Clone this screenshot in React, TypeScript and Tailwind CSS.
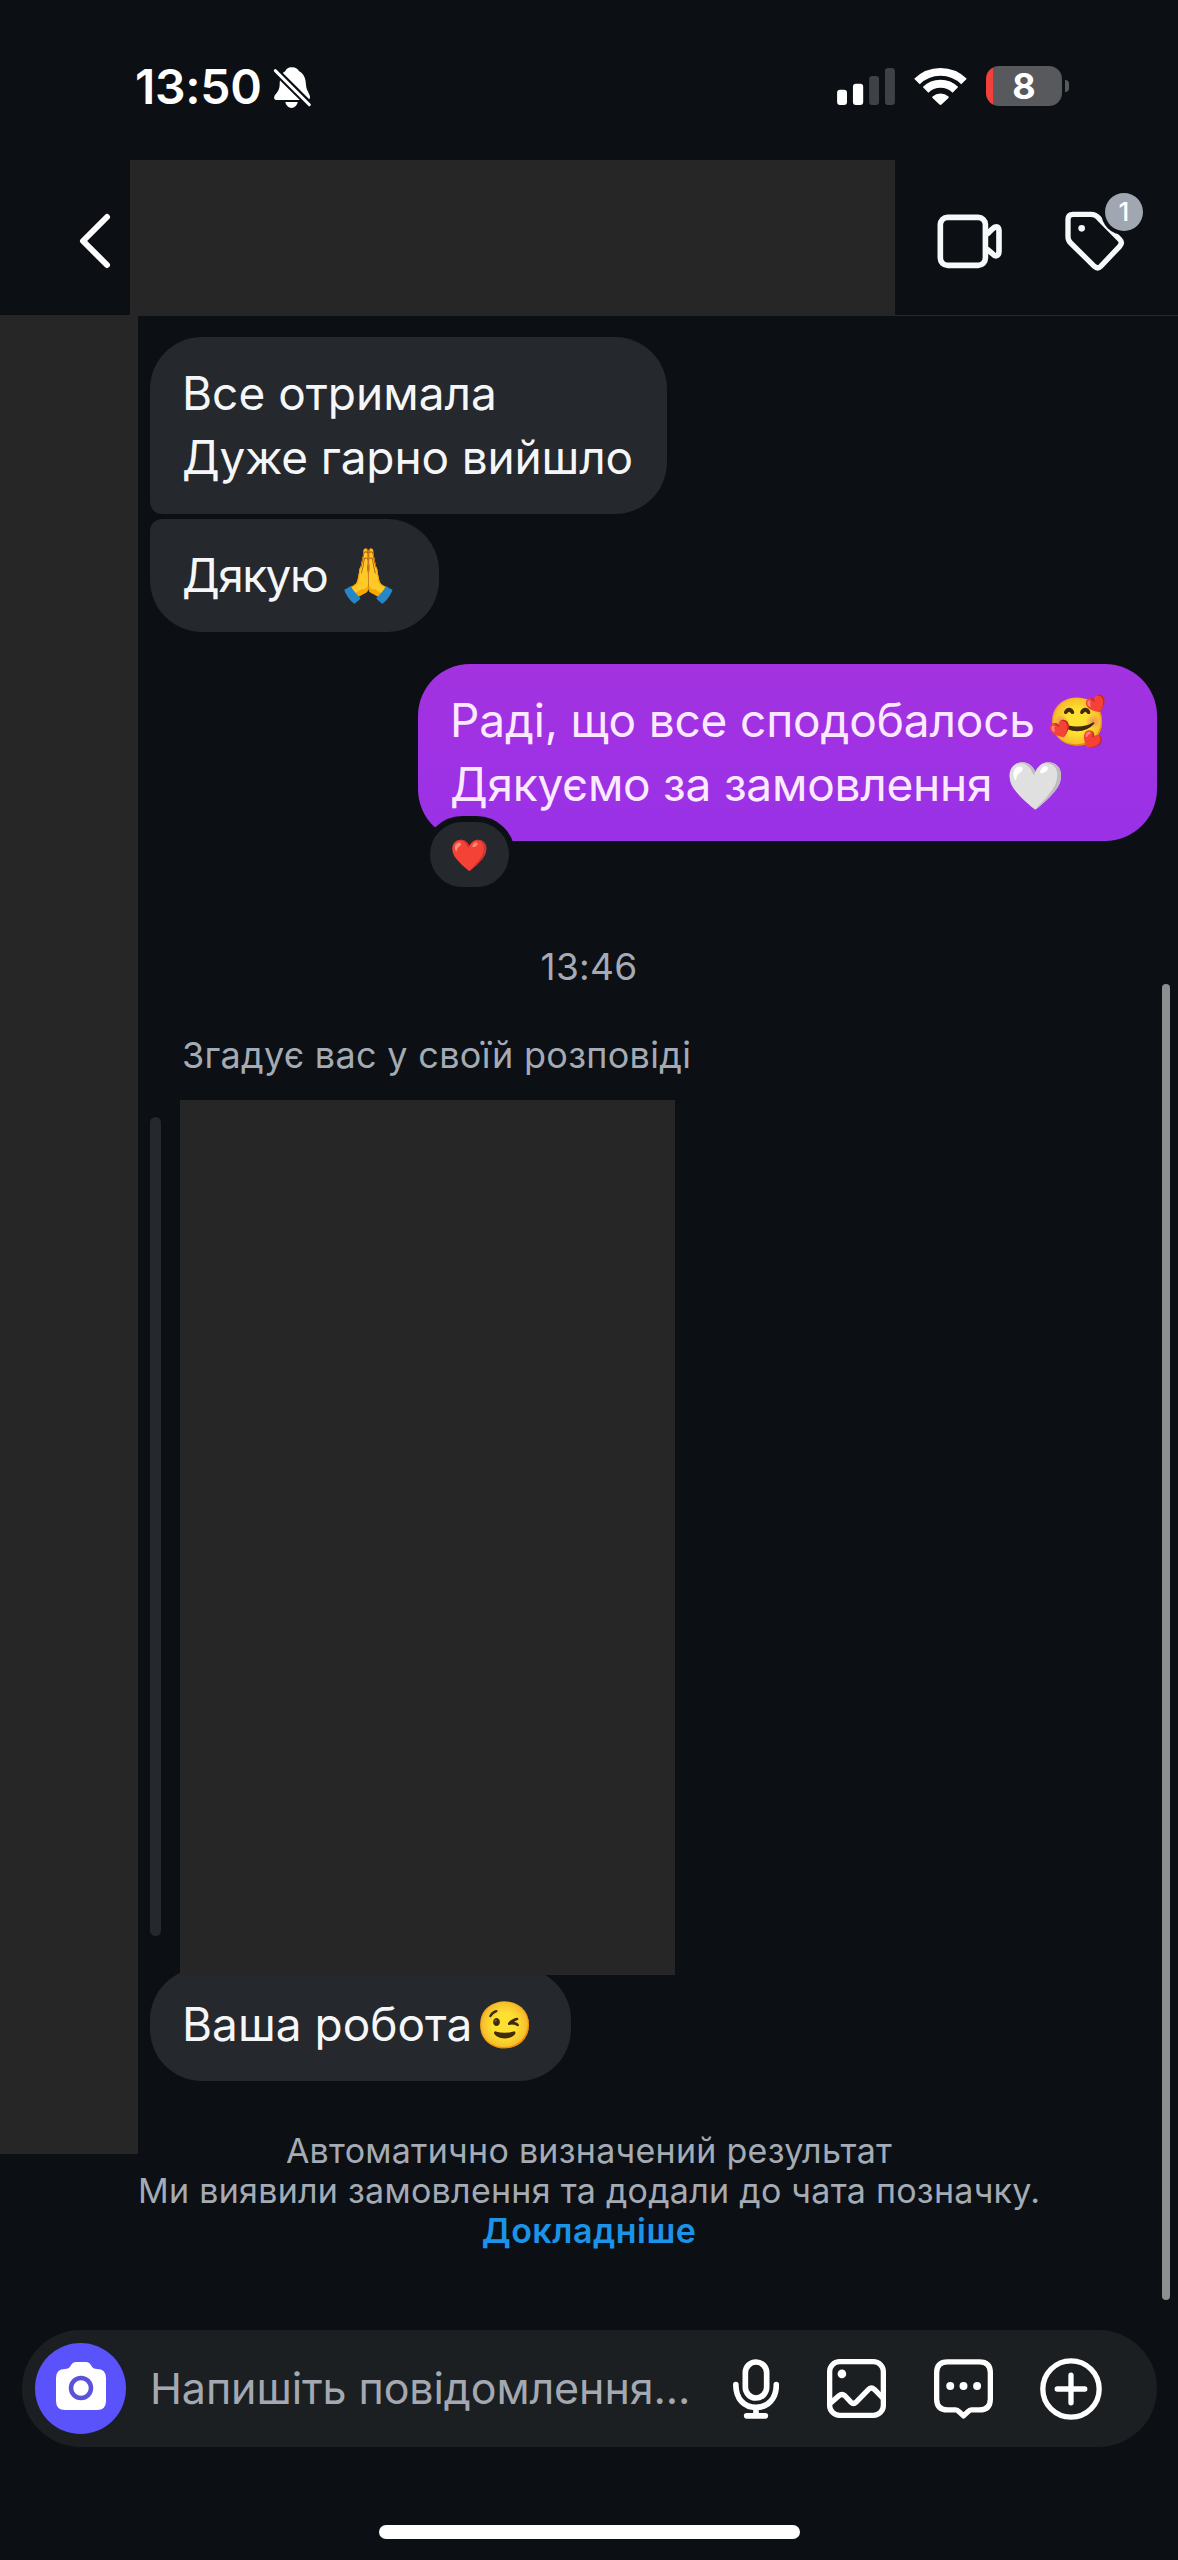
import type { ReactNode } from 'react';
import clsx from 'clsx';

function Emoji({ children, className }: { children: ReactNode; className?: string }) {
  return (
    <span className={clsx('flex shrink-0 items-center justify-center overflow-visible leading-none', className)}>
      {children}
    </span>
  );
}

function Line({ children, className }: { children: ReactNode; className?: string }) {
  return <div className={clsx('flex h-16 items-center leading-[64px] whitespace-pre', className)}>{children}</div>;
}

function Bubble({ children, className }: { children: ReactNode; className?: string }) {
  return (
    <div className={clsx('shrink-0 rounded-[52px] px-8 pt-6 text-[46px] text-[#f5f6f8]', className)}>{children}</div>
  );
}

function BellOff() {
  return (
    <svg viewBox="636 78 118 128" className="h-[43px] w-[39px]" aria-hidden="true">
      <path
        fill="#fff"
        d="M693 81c12 0 19 6 22 12 16 8 20 24 21 42 1 17 12 26 12 36 0 6-3 9-9 9H647c-7 0-9-5-7-11 4-9 15-15 16-33 1-22 3-37 17-43 3-6 8-12 20-12z"
      />
      <path fill="#fff" d="M673 186h38c-3 11-10 18-19 18s-16-7-19-18z" />
      <path stroke="#0c1014" strokeWidth="22" d="M636 84l118 117" />
      <path stroke="#fff" strokeWidth="9" strokeLinecap="round" d="M643 91l103 103" />
    </svg>
  );
}

function Signal() {
  return (
    <svg viewBox="108 83 175 112" className="h-[37px] w-[58px]" aria-hidden="true">
      <rect x="108" y="149" width="30" height="46" rx="9" fill="#fff" />
      <rect x="156" y="131" width="31" height="64" rx="9" fill="#fff" />
      <rect x="205" y="107" width="30" height="88" rx="9" fill="#3e4145" />
      <rect x="253" y="83" width="30" height="112" rx="9" fill="#3e4145" />
    </svg>
  );
}

function Wifi() {
  return (
    <svg viewBox="340 81 160 114" className="h-[38px] w-[53px]" fill="none" stroke="#fff" aria-hidden="true">
      <path strokeWidth="24" d="M349 124.500a101 101 0 0 1 142 0" />
      <path strokeWidth="24" d="M375 149.500a64 64 0 0 1 90 0" />
      <path fill="#fff" stroke="none" d="M396 170a36 36 0 0 1 48 0q2 2 0 4l-21 20q-3 2-6 0l-21-20q-2-2 0-4z" />
    </svg>
  );
}

function StatusBar() {
  return (
    <div className="flex h-[160px] shrink-0 items-start text-white">
      <div className="mt-[57px] ml-[135px] text-[48px] leading-[60px] font-semibold tracking-[-0.3px]">13:50</div>
      <div className="mt-[66px] ml-[11px]">
        <BellOff />
      </div>
      <div className="mt-[66px] mr-[109px] ml-auto flex h-10 items-center">
        <Signal />
        <div className="ml-[19px]">
          <Wifi />
        </div>
        <div className="ml-[19px] flex h-10 w-[76px] rounded-[13px] bg-linear-to-r from-[#f4403a] from-[7px] to-[#57595c] to-[7px] text-[36px] leading-10 font-bold">
          <span className="mx-auto">8</span>
        </div>
        <div className="ml-[3px] h-3 w-1 rounded-r-full bg-[#57595c]" />
      </div>
    </div>
  );
}

function Header() {
  return (
    <header className="flex h-[156px] shrink-0 border-b border-[#25282c]">
      <div className="flex w-[130px] shrink-0 items-center pl-[79px]">
        <svg viewBox="0 0 34 56" className="mt-1.5 h-14 w-[34px]" fill="none" aria-hidden="true">
          <path d="M28 4L4 28l24 24" stroke="#fff" strokeWidth="6" strokeLinecap="round" strokeLinejoin="round" />
        </svg>
      </div>
      <div className="-mb-px w-[765px] shrink-0 bg-[#262627]" />
      <svg
        viewBox="408 518 200 172"
        className="mt-[53px] ml-[41px] h-[57px] w-[67px]"
        fill="none"
        stroke="#f7f8fa"
        strokeWidth="17"
        aria-hidden="true"
      >
        <rect x="420" y="531" width="136" height="145" rx="22" />
        <path d="M560 583l16-16q10-10 17-6 4 3 4 12v60q0 10-5 13-7 4-16-6l-16-14" strokeLinejoin="round" />
      </svg>
      <div className="relative mt-[32px] ml-[61px] size-20">
        <svg viewBox="793 455 240 240" className="size-20" fill="none" aria-hidden="true">
          <path
            d="M805 537q0-15 15-15h54q13 0 21 9l65 66q10 10 0 21l-57 60q-9 9-19 0l-71-70q-8-8-8-19z"
            stroke="#f7f8fa"
            strokeWidth="16"
          />
          <circle cx="846" cy="564" r="10" fill="#f7f8fa" />
          <circle cx="973" cy="515" r="69" fill="#0c1014" />
        </svg>
        <span className="absolute top-[1px] right-[1px] flex size-[38px] items-center justify-center rounded-full bg-[#a0a7b1] text-[26px] leading-none font-medium text-white">
          1
        </span>
      </div>
    </header>
  );
}

function Messages() {
  return (
    <main className="relative flex h-[2014px] shrink-0">
      <div className="-mt-px h-[1839px] w-[138px] shrink-0 bg-[#262627]" />
      <div className="flex w-[1019px] shrink-0 flex-col items-start pl-3">
        <Bubble className="mt-[21px] h-[177px] w-[517px] rounded-bl-[12px] bg-[#25282c]">
          <Line>Все отримала</Line>
          <Line className="tracking-[-0.15px]">Дуже гарно вийшло</Line>
        </Bubble>
        <Bubble className="mt-[5px] h-[113px] w-[289px] rounded-tl-[12px] bg-[#25282c]">
          <Line>
            <span className="tracking-[-1.5px]">Дякую</span>
            <Emoji className="ml-[12px] w-[60px] text-[52px]">🙏</Emoji>
          </Line>
        </Bubble>

        <div className="relative mt-8 self-end">
          <Bubble className="h-[177px] w-[739px] bg-linear-to-b from-[#a332e0] to-[#9a31e7] text-[#fbeaff]">
            <Line className="tracking-[-0.15px]">
              Раді, що все сподобалось
              <Emoji className="ml-[13px] w-[60px] text-[47px]">🥰</Emoji>
            </Line>
            <Line className="tracking-[-0.24px]">
              Дякуємо за замовлення
              <Emoji className="ml-[13px] w-[60px] text-[47px]">🤍</Emoji>
            </Line>
          </Bubble>
          <div className="absolute top-[152px] left-[6px] flex h-[77px] w-[91px] items-center justify-center rounded-full border-6 border-[#0c1014] bg-[#25282c]">
            <Emoji className="text-[31px]">❤️</Emoji>
          </div>
        </div>

        <div className="mt-[104px] ml-[-12px] w-[902px] text-center text-[37px] leading-[44px] tracking-[0.3px] text-[#a4abb4]">
          13:46
        </div>
        <div className="mt-[44px] ml-8 text-[36px] leading-[44px] tracking-[0.3px] text-[#a4abb4]">
          Згадує вас у своїй розповіді
        </div>
        <div className="z-10 mt-[23px] flex h-[875px] shrink-0">
          <div className="mt-[17px] h-[819px] w-[11px] rounded-full bg-[#25282c]" />
          <div className="ml-[19px] w-[495px] bg-[#262627]" />
        </div>
        <Bubble className="-mt-[7px] h-[113px] w-[421px] bg-[#25282c]">
          <Line>
            Ваша робота
            <Emoji className="ml-[3px] w-[60px] text-[46px]">😉</Emoji>
          </Line>
        </Bubble>

        <div className="mt-[50px] ml-[-12px] w-[902px] text-center text-[34px] leading-10 tracking-[0.27px] whitespace-nowrap text-[#a4abb4]">
          <p>Автоматично визначений результат</p>
          <p>Ми виявили замовлення та додали до чата позначку.</p>
          <p className="font-semibold tracking-[0.5px] text-[#1a93e8]">Докладніше</p>
        </div>
      </div>
      <div className="absolute top-[668px] right-2 h-[1316px] w-2 rounded-full bg-[#8d8f91]" />
    </main>
  );
}

function Composer() {
  return (
    <footer className="ml-[22px] flex h-[117px] w-[1135px] shrink-0 items-center rounded-full bg-[#1c1f22] pr-[55px] pl-[13px]">
      <div className="flex size-[91px] shrink-0 items-center justify-center rounded-full bg-[#5a52fa]">
        <svg viewBox="0 0 50 48" className="mb-[6px] h-12 w-[50px]" aria-hidden="true">
          <path
            fill="#fff"
            d="M9 7q4 0 5.500-3Q16.500 0 20 0h10q3.500 0 5.500 4Q37 7 41 7q9 0 9 9v23q0 9-9 9H9q-9 0-9-9V16q0-9 9-9z"
          />
          <circle cx="25" cy="26" r="10" fill="none" stroke="#5a52d8" strokeWidth="4.500" />
        </svg>
      </div>
      <div className="ml-[24px] text-[43px] tracking-[-0.1px] whitespace-nowrap text-[#a4a9b1]">
        Напишіть повідомлення...
      </div>
      <div className="ml-auto flex items-center gap-12">
        <svg viewBox="96 147 138 180" className="h-[60px] w-[46px]" fill="none" stroke="#fff" strokeWidth="17" strokeLinecap="round" aria-hidden="true">
          <rect x="133" y="156" width="64" height="108" rx="32" />
          <path d="M104.500 224c0 44 26 68 60.500 68s61-24 61-68M165 292v24M137 317.500h56" />
        </svg>
        <svg viewBox="381 147 178 178" className="size-[59px]" fill="none" stroke="#fff" strokeWidth="16" strokeLinejoin="round" aria-hidden="true">
          <rect x="389" y="155" width="162" height="162" rx="30" />
          <circle cx="426" cy="192" r="13" fill="#fff" stroke="none" />
          <path d="M392 280l25-22q9-8 18 0l18 19q8 8 16 0l36-37q9-10 19-1l25 25" />
        </svg>
        <svg viewBox="702 147 178 180" className="h-[60px] w-[59px]" fill="none" stroke="#fff" strokeWidth="16" strokeLinejoin="round" aria-hidden="true">
          <path d="M743 155h96q33 0 33 33v79q0 33-33 33h-24q-6 0-10 5l-14 13-14-13q-4-5-10-5h-24q-33 0-33-33v-79q0-33 33-33z" />
          <g fill="#fff" stroke="none">
            <circle cx="751" cy="228" r="12" />
            <circle cx="791" cy="228" r="12" />
            <circle cx="832" cy="228" r="12" />
          </g>
        </svg>
        <svg viewBox="1019 142 187 187" className="-ml-px size-[62px]" fill="none" stroke="#fff" strokeWidth="16" strokeLinecap="round" aria-hidden="true">
          <circle cx="1112.500" cy="235.500" r="85" />
          <path d="M1112.500 194v83M1071 235.500h83" />
        </svg>
      </div>
    </footer>
  );
}

export default function App() {
  return (
    <div className="flex h-[2560px] w-[1178px] flex-col bg-[#0c1014] font-[Inter,'Noto_Color_Emoji',sans-serif]">
      <StatusBar />
      <Header />
      <Messages />
      <Composer />
      <div className="mt-[78px] ml-[379px] h-[14px] w-[421px] shrink-0 rounded-full bg-white" />
    </div>
  );
}
